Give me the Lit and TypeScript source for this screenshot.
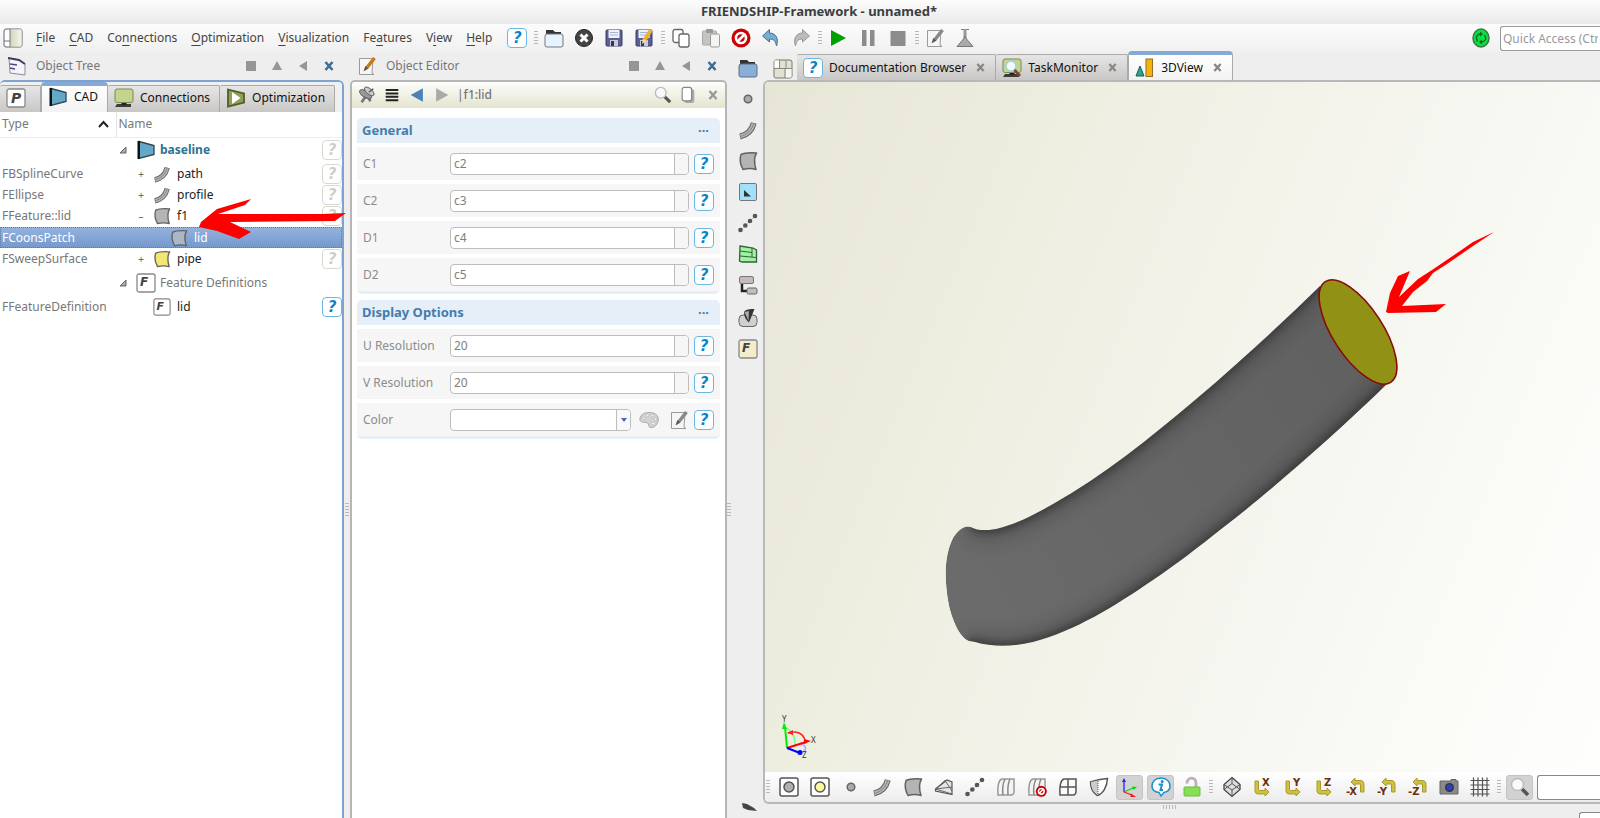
import { LitElement, html, svg, css, nothing } from "lit";
import { customElement, property, state } from "lit/decorators.js";
import { classMap } from "lit/directives/class-map.js";

const SURFACE = "M3 3.500C7 1.500 12 1.500 18.500 2C15.500 7 16 12 18 18.500C13 17 9 17.500 5 18.500C2 13 1.500 8 3 3.500Z";

const curve = svg`
  <path d="M2 16.500C9 15 14 10 15.800 3" fill="none" stroke="#666" stroke-width="6"/>
  <path d="M2.500 16.300C9 15 14 10 15.600 3.500" fill="none" stroke="#b5b5b5" stroke-width="4"/>
  <path d="M2 16.500C9 15 14 10 15.800 3" fill="none" stroke="#777" stroke-width=".8"/>`;

const surface = (fill: string) =>
  svg`<path d=${SURFACE} fill=${fill} stroke="#626262" stroke-width="1.500" stroke-linejoin="round"/>`;

const stop = svg`
  <circle cx="10" cy="10" r="9.500" fill="#cc0000"/>
  <circle cx="10" cy="10" r="5" fill="none" stroke="#fff" stroke-width="2.600"/>
  <path d="M6.500 13.500L13.500 6.500" stroke="#fff" stroke-width="2.600"/>`;

const floppy = svg`
  <rect x="2" y="2" width="16" height="16" rx="1" fill="#5a5f95" stroke="#3a3d68"/>
  <rect x="4.500" y="2" width="11" height="8" fill="#eef1fa"/>
  <path d="M6 4.500H14M6 7H14" stroke="#a9b4d6"/>
  <rect x="6" y="12" width="8" height="6" fill="#c9cad6"/>
  <rect x="7" y="13" width="3" height="5" fill="#33365c"/>`;

const editPage = (pen: string) => svg`
  <path d="M2.500 2.500H16L15 17L17 18.500H2.500Z" fill="#f6f6f6" stroke="#9a9a9a"/>
  <path d="M17.500 2L10 11.500" stroke=${pen} stroke-width="3.500"/>
  <path d="M11.500 12.500L8.300 10L6.500 15.500Z" fill="#555"/>`;

const frame = (fill: string) => svg`
  <rect x="1" y="1" width="18" height="18" rx="2" fill="#fff" stroke="#555" stroke-width="1.500"/>
  <circle cx="10" cy="10" r="5" fill=${fill} stroke="#555" stroke-width="1.500"/>`;

const points = svg`
  <path d="M3 17L17 3" stroke="#888" stroke-dasharray="1 1"/>
  <g fill="#555"><circle cx="2.500" cy="17" r="2.300"/><circle cx="7.300" cy="12.500" r="2.300"/>
  <circle cx="12" cy="8" r="2.300"/><circle cx="17" cy="3" r="2.300"/></g>`;

const stripes = svg`
  <path d="M2 17.500C1.500 10 2.500 3 6 2H18V14C18 17 17 18 15 18H2Z" fill="#f4f4f4" stroke="#999" stroke-width="1.500"/>
  <path d="M7 18C6 11 7 6 9 2M12 18C11.500 11 12 6 14 2" fill="none" stroke="#888" stroke-width="1.500"/>`;

const letterBox = (letter: string, fill: string, x: number, y: number, size: number) => svg`
  <rect x="1" y="1" width="18" height="18" rx="2" fill=${fill} stroke="#888" stroke-width="1.300"/>
  <text x=${x} y=${y} font-size=${size} font-weight="700" font-style="italic" fill="#444">${letter}</text>`;

const magnifier = svg`
  <path d="M12 12L18 18" stroke="#555" stroke-width="3.500"/>
  <circle cx="7.500" cy="7.500" r="6" fill="#fafafa" stroke="#bbb" stroke-width="1.500"/>`;

const axisArrow = (axis: string) => axis.startsWith("-")
  ? svg`<path d="M5 5L9 1V3.500H14C17 3.500 18 5 18 8V15H14.500V8C14.500 7 14 7 13 7H9V9Z" fill="#cfc043" stroke="#a89a28"/>
        <text x="0" y="18" font-size="10" font-weight="700" fill="#6e3010">${axis}</text>`
  : svg`<path d="M2 4H5.500V12C5.500 13 6 13.500 7 13.500H12V11L16 15L12 19V17H6C3 17 2 16 2 13Z" fill="#cfc043" stroke="#a89a28"/>
        <text x="9" y="9" font-size="10" font-weight="700" fill="#6e3010">${axis}</text>`;

const monitor = svg`
  <path d="M3 16H17V19H1Z" fill="#3c3c3c"/><rect x="7.500" y="14" width="5" height="3" fill="#222"/>
  <rect x="1" y="1" width="18" height="13.500" rx="2" fill="#c3d48d" stroke="#7c8a52"/>`;

const ICONS: Record<string, unknown> = {
  perspective: svg`<defs><linearGradient id="p"><stop offset="0" stop-color="#d4d4bc"/><stop offset="1" stop-color="#f5f5ec"/></linearGradient></defs>
    <rect x="1" y="1" width="18" height="18" rx="2" fill="#fff" stroke="#666"/><rect x="7" y="1.500" width="11.500" height="17" fill="url(#p)"/>
    <path d="M7 1V19M1 13H7" stroke="#777" fill="none"/>`,
  layout: svg`<rect x="1" y="1" width="18" height="18" rx="2" fill="#e2e2cf" stroke="#777"/><rect x="1.500" y="1.500" width="5" height="7" fill="#fff"/>
    <path d="M6.500 1V9M1 9.500H19M12 9.500V19M13 1V9" stroke="#888" fill="none"/><rect x="13" y="10" width="5.500" height="8.500" fill="#f6f6ee"/>`,
  folder: svg`<path d="M2 8V2H9L11 4H17V8Z" fill="#333"/><rect x="1" y="6" width="18" height="13" rx="2" fill="#e6f2ff" stroke="#777"/>`,
  blueFolder: svg`<path d="M2 8V2H9L11 4H17V8Z" fill="#333"/><rect x="1" y="6" width="18" height="13" rx="2" fill="#8aaed6" stroke="#5a6f88"/>`,
  close: svg`<circle cx="10" cy="10" r="8.500" fill="#444" stroke="#222"/><path d="M6.500 6.500L13.500 13.500M13.500 6.500L6.500 13.500" stroke="#fff" stroke-width="3"/>`,
  save: floppy,
  saveAs: svg`${floppy}<path d="M17 2L10.500 12" stroke="#f0b030" stroke-width="4"/><path d="M8.800 10.800L12.200 13L8 16Z" fill="#f4dfae"/>`,
  copy: svg`<rect x="2" y="1.500" width="10" height="13" rx="2" fill="#fff" stroke="#666" stroke-width="1.300"/><rect x="8" y="6" width="10" height="13" rx="2" fill="#fff" stroke="#666" stroke-width="1.300"/>`,
  paste: svg`<rect x="1.500" y="3" width="14" height="14" rx="1" fill="#c4c4c0" stroke="#aaa"/><rect x="5" y="1" width="7" height="4" rx="1" fill="#999"/><rect x="9.500" y="6" width="9" height="13" rx="1.500" fill="#f4f4f1" stroke="#999"/>`,
  forbid: stop,
  undo: svg`<path d="M1.500 8L8.500 1.500V5C15 5 18 11 15.500 18C14.500 13 13 11 8.500 11V14Z" fill="#76aed0" stroke="#4a6f88"/>`,
  redo: svg`<path d="M18.500 8L11.500 1.500V5C5 5 2 11 4.500 18C5.500 13 7 11 11.500 11V14Z" fill="#bbb" stroke="#999"/>`,
  play: svg`<path d="M3 2L18 10L3 18Z" fill="#00a000"/>`,
  pause: svg`<path d="M4 2H8.500V18H4ZM12 2H16.500V18H12Z" fill="#8c8c8c"/>`,
  stop: svg`<rect x="2.500" y="3" width="15" height="15" fill="#8c8c8c"/>`,
  editGray: editPage("#888"),
  edit: editPage("#c87a14"),
  flask: svg`<path d="M6 1.500H14" stroke="#777"/><rect x="8.500" y="1" width="3" height="10" fill="#999"/><path d="M10 8L11.500 11L18 18.500H2L8.500 11Z" fill="#aaa" stroke="#777"/>`,
  sync: svg`<ellipse cx="10" cy="10" rx="8" ry="9" fill="#12dc44" stroke="#3a7a48" stroke-width="1.500"/><path d="M6.500 13.500C4 9 6 6 10 6M13.500 7C16 11 14 14 10 14" fill="none" stroke="#07701f" stroke-width="1.300"/><path d="M9 3.500L12 6L9 8.500ZM11 11.500L8 14L11 16.500Z" fill="#07701f"/>`,
  tree: svg`<path d="M2 2L12 4L18 8V19L3 17Z" fill="#f4f4fa" stroke="#8a8a9c"/><path d="M1 2L12 4L18 8" fill="none" stroke="#3d3d66" stroke-width="2"/><path d="M3 8L10 9M3 12L8 13" stroke="#4a4a78" stroke-width="1.500"/>`,
  cad: svg`<path d="M3 1.500L18 5.500V14.500L3 18.500Z" fill="#64a8c8" stroke="#2f4450" stroke-width="1.300"/><path d="M1.500 1H4V19H1.500Z" fill="#111"/>`,
  parameters: letterBox("P", "#fff", 5, 15, 14),
  feature: letterBox("F", "#fff", 4, 13, 12),
  featureYellow: letterBox("F", "#f3edcb", 4, 13, 12),
  monitor,
  task: svg`${monitor}<circle cx="9" cy="8" r="5" fill="#eefaff" stroke="#a5cfe0" stroke-width="1.500"/><path d="M12.500 12L18 18" stroke="#7a4a36" stroke-width="3"/>`,
  optimize: svg`<path d="M2 1.500L18 5.500V14.500L2 18.500Z" fill="#8ea052" stroke="#4f5c2b" stroke-width="1.800"/><path d="M6 4L14.500 10L6 16Z" fill="#fff"/>`,
  view3d: svg`<path d="M5 8L9 18H1Z" fill="#2aa593" stroke="#1c5c52"/><rect x="11" y="1" width="6.500" height="17.500" fill="#f6b40a" stroke="#9a6d28"/>`,
  curve,
  surface: surface("#b4b4b4"),
  surfaceBlue: surface("#a9b7c8"),
  surfaceYellow: surface("#f4e673"),
  point: svg`<circle cx="10" cy="10" r="3.800" fill="#aaa" stroke="#666" stroke-width="1.500"/>`,
  plane: svg`<rect x="1.500" y="1.500" width="17" height="17" rx="1.500" fill="#9fe2fa" stroke="#777"/><path d="M6 8V14.500H13Z" fill="#333"/>`,
  points,
  mesh: svg`<path d="M2 2L15 4L18.500 6V18H4L1.500 17Z" fill="#9df5a4" stroke="#35603a" stroke-width="1.300"/><path d="M2 7L14 8.500M2 12L18 13.500M14 4V13" stroke="#35603a" stroke-width="1" fill="none"/>`,
  tree2: svg`<path d="M4 9V16H9" fill="none" stroke="#222" stroke-width="2.500"/><rect x="1.500" y="1.500" width="14" height="7" rx="1.500" fill="#c4bcbc" stroke="#777"/><rect x="9" y="13" width="10" height="6" rx="1.500" fill="#c4bcbc" stroke="#666"/>`,
  offset: svg`<rect x="1" y="7" width="18" height="11.500" rx="4" fill="#d0d0d0" stroke="#666"/><path d="M6 4C8 1 12 1 16.500 1L11 14.500C8 12 6 9 6 4Z" fill="#333"/><path d="M6.500 4L10.500 13L11 3Z" fill="#aaa"/>`,
  dish: svg`<path d="M9 10L14 17M9 11L4 18" stroke="#777" stroke-width="3"/><g fill="#999" stroke="#555"><ellipse cx="8.500" cy="9" rx="3.500" ry="7.500" transform="rotate(-60 8.500 9)"/><ellipse cx="12.500" cy="6" rx="3" ry="6.500" transform="rotate(-50 12.500 6)" fill="#ccc"/></g><path d="M12 7L17 3" stroke="#555" stroke-width="1.500"/>`,
  lines: svg`<path d="M3 4.500H17M3 8.300H17M3 12H17M3 15.800H17" stroke="#222" stroke-width="2.200"/>`,
  back: svg`<path d="M16.500 2.500V17.500L3 10Z" fill="#4c82b8"/>`,
  forward: svg`<path d="M3.500 2.500V17.500L17 10Z" fill="#aaa"/>`,
  magnifier,
  pages: svg`<rect x="6" y="3.500" width="11" height="15.500" rx="2.500" fill="#aaa"/><rect x="3.500" y="1.500" width="10.500" height="15" rx="2.500" fill="#fff" stroke="#888" stroke-width="1.300"/>`,
  palette: svg`<path d="M1 8C2 2 14 0 18.500 6C21 11 17 18 12 17.500C8 17 11 13 7 12.500C4 12.500 0 12 1 8Z" fill="#d2d2d2" stroke="#aaa"/><g fill="#f8f8f8" stroke="#b4b4b4" stroke-width=".7"><circle cx="4.500" cy="8.500" r="1.300"/><circle cx="8.500" cy="5.500" r="1.300"/><circle cx="13.500" cy="5.500" r="1.300"/><circle cx="16.500" cy="9" r="1.300"/><circle cx="14" cy="13.500" r="1.500"/></g>`,
  frame: frame("#b0b0b0"),
  frameYellow: frame("#fdf8a0"),
  solid: svg`<path d="M1.500 12L13 3L18 5V17.500L1.500 14Z" fill="#e6e6e6" stroke="#555" stroke-width="1.200"/><path d="M1.500 12L11 3.500L18 14M1.500 12L18 10M11 4L13 3M1.500 12L18 17" fill="none" stroke="#666"/>`,
  stripes,
  stripesOff: svg`${stripes}<g transform="translate(8.500 8.500) scale(.58)">${stop}</g>`,
  quad: svg`<path d="M2 18C1.500 10 2.500 3 6 2H18V14C18 17 17 18 15 18Z" fill="#fafafa" stroke="#555" stroke-width="1.500"/><path d="M10 2V18M2 10H18" stroke="#555" stroke-width="1.500"/>`,
  shield: svg`<path d="M1.500 5C7 3 12 2 18.500 1.500C18 10 14 17 8 18.500C3 15 1.500 10 1.500 5Z" fill="#fff" stroke="#555" stroke-width="1.500"/><path d="M2 5L9 3.500V18C4 15 2 10 2 5Z" fill="#ccc"/><path d="M9 4V17" stroke="#555" stroke-dasharray="1 1"/>`,
  axes: svg`<path d="M4 15V3" stroke="#22f" stroke-width="1.300"/><path d="M4 1L6 5H2Z" fill="#22f"/><path d="M4 15L13 11" stroke="#0d0" stroke-width="1.300"/><path d="M17 10L12 9.500L13.500 13Z" fill="#0d0"/><path d="M4 15L12 18" stroke="#f11" stroke-width="1.300"/><path d="M16 20L11 16.500L10.500 20Z" fill="#f11"/>`,
  info: svg`<path d="M10 1C16 1 19 5 19 9C19 13 16 15 13 15.500L10 19L8 15.500C4 15 1 13 1 9C1 5 4 1 10 1Z" fill="#fff" stroke="#1a8fd0" stroke-width="1.500"/><circle cx="11.200" cy="4.500" r="1.500" fill="#1a8fd0"/><path d="M7.500 7.500H11L9.500 13H12" fill="none" stroke="#1a8fd0" stroke-width="2"/>`,
  lock: svg`<path d="M5 6.500C5 -.500 14 -.500 14 6V10" fill="none" stroke="#b9b0b9" stroke-width="2.800"/><rect x="2" y="10" width="16" height="9" rx="1" fill="#86e055" stroke="#6bb945"/>`,
  cube: svg`<path d="M10 .500L18 7.500V12.500L10 19.500L2 12.500V7.500Z" fill="#ddd" stroke="#444" stroke-width="1.300"/><path d="M2 7.500L10 13L18 7.500M10 13V19M2 12.500L10 6.500L18 12.500M10 1V6.500" fill="none" stroke="#555"/>`,
  X: axisArrow("X"), Y: axisArrow("Y"), Z: axisArrow("Z"),
  "-X": axisArrow("-X"), "-Y": axisArrow("-Y"), "-Z": axisArrow("-Z"),
  camera: svg`<path d="M1 4H12V2.500H17V4H19V17H1Z" fill="#8a8a8a" stroke="#666"/><circle cx="10.500" cy="10.500" r="4.500" fill="#334"/><circle cx="10.500" cy="10.500" r="3" fill="#2c3ed0"/>`,
  grid: svg`<path d="M.500 3.500H19.500M.500 8H19.500M.500 12.500H19.500M.500 17H19.500M3.500 .500V19.500M8 .500V19.500M12.500 .500V19.500M17 .500V19.500" stroke="#555" stroke-width="1.200"/>`,
  wedge: svg`<path d="M4 0L9 1L16 5L19 8L10 7L5 5Z" fill="#444"/>`,
};

const icon = (name: string) => html`<svg class="icon" viewBox="0 0 20 20" aria-hidden="true">${ICONS[name]}</svg>`;
const help = (muted = false, label = "Help") =>
  html`<button class=${classMap({ help: true, muted })} aria-label=${label}>?</button>`;
const tool = (name: string, pressed = false) =>
  html`<button class=${classMap({ tool: true, pressed })} aria-label=${name}>${icon(name)}</button>`;
const grip = html`<span class="grip"></span>`;

const shared = css`
  :host { font: 12px/16px "Noto Sans", "Open Sans", sans-serif; color: #555; box-sizing: border-box; }
  *, *::before, *::after { box-sizing: border-box; }
  button, input, select { font: inherit; color: inherit; margin: 0; }
  button { border: 0; background: none; padding: 0; display: flex; align-items: center; justify-content: center; flex: none; }
  .icon { width: 20px; height: 20px; flex: none; display: block; overflow: visible; font-family: "DejaVu Sans", sans-serif; }
  .help { width: 20px; height: 20px; border: 1px solid #68b8e6; border-radius: 4px; background: #fff; color: #0a84c8; font: italic 700 15px/18px "DejaVu Sans", sans-serif; }
  .help.muted { border-color: #d8d8d2; color: #cfcfc6; }
  .grip { width: 4px; height: 16px; flex: none; background: radial-gradient(circle, #b8b8b8 35%, transparent 45%) 0 0 / 2px 3px; }
  .dock { display: flex; align-items: center; height: 28px; color: #777; padding: 0 10px 0 7px; gap: 9px; flex: none; }
  .dock h2 { font: inherit; margin: 0; flex: 1; }
  .dock .window { display: flex; gap: 15px; }
  .dock .window button { width: 11px; height: 12px; }
  .dock svg.mini { width: 10px; height: 10px; display: block; }
  .tab { height: 27px; padding: 0 8px 0 6px; gap: 6px; color: #111; border: 1px solid #aaa; border-bottom: 0; border-left-width: 0; background: linear-gradient(#e6e6e6, #c9c7c5); border-radius: 2px 2px 0 0; }
  .tab.active { height: 30px; background: linear-gradient(#fff, #f2f2f2); border-top: 4px solid #86aad8; border-left-width: 1px; border-radius: 4px 4px 0 0; }
`;

const dockButtons = html`
  <div class="window">
    <button aria-label="Dock"><svg class="mini" viewBox="0 0 10 10"><path d="M0 0H10V10H0Z" fill="#969696"/></svg></button>
    <button aria-label="Collapse"><svg class="mini" viewBox="0 0 10 10"><path d="M5 0L10 9H0Z" fill="#969696"/></svg></button>
    <button aria-label="Hide"><svg class="mini" viewBox="0 0 10 10"><path d="M9 0V10L1 5Z" fill="#969696"/></svg></button>
    <button aria-label="Close"><svg class="mini" viewBox="0 0 10 10"><path d="M1.500 1L8.500 9M8.500 1L1.500 9" stroke="#3b6f96" stroke-width="2.600"/></svg></button>
  </div>`;

interface Row { type: string; name: string; level: number; icon: string; twist?: string; kind?: string; help?: "muted" | "active"; }

const ROWS: Row[] = [
  { type: "", name: "baseline", level: 0, icon: "cad", twist: "open", kind: "tall root", help: "muted" },
  { type: "FBSplineCurve", name: "path", level: 1, icon: "curve", twist: "+", help: "muted" },
  { type: "FEllipse", name: "profile", level: 1, icon: "curve", twist: "+", help: "muted" },
  { type: "FFeature::lid", name: "f1", level: 1, icon: "surface", twist: "–", kind: "mid", help: "muted" },
  { type: "FCoonsPatch", name: "lid", level: 2, icon: "surfaceBlue", kind: "selected" },
  { type: "FSweepSurface", name: "pipe", level: 1, icon: "surfaceYellow", twist: "+", kind: "mid", help: "muted" },
  { type: "", name: "Feature Definitions", level: 0, icon: "feature", twist: "open", kind: "tall group" },
  { type: "FFeatureDefinition", name: "lid", level: 1, icon: "feature", kind: "mid", help: "active" },
];

@customElement("object-tree")
class ObjectTree extends LitElement {
  @state() private tab = "CAD";

  static styles = [shared, css`
    :host { display: flex; flex-direction: column; min-height: 0; }
    .panel { flex: 1; border: 2px solid #7ea3d0; border-left-width: 0; border-bottom: 0; border-radius: 5px 6px 0 0; background: #fff; overflow: hidden; }
    .tabs { display: flex; align-items: flex-end; background: #f0f0f0; height: 30px; }
    .tab { padding: 0 9px 3px 6px; }
    .tab.active { padding-bottom: 4px; }
    .tab.first { padding-right: 14px; }
    table { width: 100%; border-collapse: collapse; table-layout: fixed; }
    th, td { padding: 0; font-weight: 400; text-align: left; white-space: nowrap; }
    th { height: 25px; color: #777; border-bottom: 1px solid #eee; }
    th:first-child { width: 116px; border-right: 1px solid #e4e4e4; }
    th:last-child { width: 20px; }
    th:nth-child(2) { padding-left: 2px; }
    .sort { display: flex; justify-content: space-between; align-items: center; padding: 0 7px 0 2px; }
    td:first-child { padding-left: 2px; color: #777; }
    tr.row { height: 21px; }
    tr.mid { height: 22px; }
    tr.tall { height: 26px; }
    .name { display: flex; align-items: center; color: #222; height: 20px; }
    .twist { width: 16px; text-align: center; color: #666; font-size: 10px; margin-right: 4px; }
    .twist svg { display: block; margin-left: 3px; }
    .root .name { color: #2c7391; font-weight: 700; }
    .group .name { color: #777; }
    .selected { background: linear-gradient(#94b2de, #7599cc); outline: 1px dotted #5a7cab; outline-offset: -1px; }
    .selected td:first-child, .selected .name { color: #fff; }
    td .icon { width: 18px; height: 18px; margin: 0 6px 0 0; }
    .tall .icon { width: 20px; height: 20px; margin-right: 4px; }
  `];

  render() {
    const tabs = [["CAD", "cad"], ["Connections", "monitor"], ["Optimization", "optimize"]];
    return html`
      <header class="dock">${icon("tree")}<h2>Object Tree</h2>${dockButtons}</header>
      <div class="panel">
        <div class="tabs" role="tablist">
          <button class="tab first" role="tab" aria-label="Parameters">${icon("parameters")}</button>
          ${tabs.map(([label, glyph]) => html`
            <button role="tab" class=${classMap({ tab: true, active: this.tab === label })}
              @click=${() => (this.tab = label)}>${icon(glyph)}${label}</button>`)}
        </div>
        <table>
          <thead><tr>
            <th><span class="sort">Type<svg width="11" height="8" viewBox="0 0 11 8"><path d="M1 7L5.500 2L10 7" fill="none" stroke="#222" stroke-width="2"/></svg></span></th>
            <th>Name</th><th></th>
          </tr></thead>
          <tbody>${ROWS.map((r) => html`
            <tr class="row ${r.kind ?? ""}">
              <td>${r.type}</td>
              <td><div class="name" style="padding-left:${r.level * 17}px">
                <span class="twist">${r.twist === "open"
                  ? html`<svg width="8" height="8"><path d="M7 1V7H1Z" fill="#aaa" stroke="#666"/></svg>`
                  : r.twist ?? nothing}</span>${icon(r.icon)}<span>${r.name}</span></div></td>
              <td>${r.help ? help(r.help === "muted") : nothing}</td>
            </tr>`)}</tbody>
        </table>
      </div>`;
  }
}

@customElement("object-editor")
class ObjectEditor extends LitElement {
  static styles = [shared, css`
    :host { display: flex; flex-direction: column; min-height: 0; }
    .panel { flex: 1; border: 2px solid #b6b6b6; border-bottom: 0; border-radius: 5px 5px 0 0; background: #fff; overflow: hidden; }
    .bar { display: flex; align-items: center; height: 26px; gap: 5px; padding: 0 2px 0 5px; background: linear-gradient(#fdfdfb, #e4e4d0); color: #777; }
    .bar .path { flex: 1; font-weight: 500; }
    .bar .icon { width: 20px; height: 18px; }
    .bar .x { width: 20px; }
    .groups { padding: 10px 5px; display: grid; gap: 6px; }
    section { border-radius: 5px; overflow: hidden; display: grid; gap: 4px; border-bottom: 3px solid #e6eff6; }
    h3 { margin: 0; height: 25px; font-size: 13px; line-height: 25px; color: #457bae; background: #e6eff7; padding: 0 11px 0 5px; display: flex; justify-content: space-between; }
    h3 button { color: inherit; font-weight: 700; }
    .field { display: flex; align-items: center; gap: 5px; height: 33px; padding: 0 6px; background: #f6f6f6; color: #8c8c8c; }
    label { width: 82px; flex: none; }
    .box { flex: 1; display: flex; height: 22px; border: 1px solid #bdbdbd; border-radius: 4px; background: #fff; overflow: hidden; min-width: 0; }
    .box input { flex: 1; min-width: 0; border: 0; background: none; padding: 0 3px; outline: 0; color: #808080; }
    .box button { width: 14px; border-left: 1px solid #bdbdbd; background: #f6f6f6; }
    .combo { display: grid; grid-template-columns: 1fr 14px; }
    .combo select { grid-area: 1 / 1 / 2 / 3; appearance: none; border: 0; background: none; width: 100%; }
    .combo span { grid-area: 1 / 2; pointer-events: none; border-left: 1px solid #bdbdbd; background: #f9f9f9; display: grid; place-items: center; }
    .actions { display: flex; gap: 10px; margin-left: 3px; }
    .actions .icon { width: 20px; height: 20px; }
  `];

  private field(label: string, value: string) {
    const id = label.replace(" ", "-");
    return html`<div class="field"><label for=${id}>${label}</label>
      <div class="box"><input id=${id} .value=${value}><button aria-label="Options of ${label}"></button></div>${help()}</div>`;
  }

  render() {
    return html`
      <header class="dock">${icon("edit")}<h2>Object Editor</h2>${dockButtons}</header>
      <div class="panel">
        <div class="bar">
          ${tool("dish")}${tool("lines")}${tool("back")}${tool("forward")}
          <span class="path">|f1:lid</span>
          ${tool("magnifier")}${tool("pages")}
          <button class="x" aria-label="Close"><svg width="10" height="10" viewBox="0 0 10 10"><path d="M1.500 1L8.500 9M8.500 1L1.500 9" stroke="#999" stroke-width="2.400"/></svg></button>
        </div>
        <div class="groups">
          <section><h3>General<button aria-label="More">···</button></h3>
            ${this.field("C1", "c2")}${this.field("C2", "c3")}${this.field("D1", "c4")}${this.field("D2", "c5")}
          </section>
          <section><h3>Display Options<button aria-label="More">···</button></h3>
            ${this.field("U Resolution", "20")}${this.field("V Resolution", "20")}
            <div class="field"><label for="color">Color</label>
              <div class="box combo"><select id="color"><option></option></select>
                <span><svg width="6" height="4"><path d="M0 0H6L3 4Z" fill="#4a62b8"/></svg></span></div>
              <div class="actions">${tool("palette")}${tool("editGray")}</div>${help()}
            </div>
          </section>
        </div>
      </div>`;
  }
}

const UPPER = "M1340 266C1280 325 1240 362 1195 400C1150 438 1103 476 1053 504C1022 522 998 531 983 530C977 530 975 529 971 527";
const LOWER = "M968 642L975 642C992 647 1012 647 1033 642C1075 631 1115 606 1153 580C1178 563 1200 546 1220 530C1256 503 1330 440 1409 362";
const TUBE = `M1320 286C1280 325 1240 362 1195 400C1150 438 1103 476 1053 504C1022 522 998 531 983 530C977 530 975 529 971 527
  C963 524 956 533 953 538C944 556 944 580 949 606C953 622 960 638 969 641L975 642C992 647 1012 647 1033 642
  C1075 631 1115 606 1153 580C1178 563 1200 546 1220 530C1256 503 1330 440 1389 382L1358 332Z`;

@customElement("scene-view")
class SceneView extends LitElement {
  static styles = css`
    :host { display: block; min-height: 0; overflow: hidden; background: linear-gradient(112deg, #e7e6d6 0%, #eeeee1 30%, #f6f6f0 62%, #fefefd 100%); }
    svg { display: block; width: 100%; height: 100%; }
    text { font: 8px "Noto Sans", sans-serif; fill: #333; }
  `;

  render() {
    return html`<svg viewBox="765 82 835 690" preserveAspectRatio="xMinYMax meet" role="img" aria-label="Pipe with lid">
      <defs>
        <clipPath id="tube"><path d=${TUBE}/></clipPath>
        <filter id="soft" x="-10%" y="-10%" width="120%" height="120%"><feGaussianBlur stdDeviation="3"/></filter>
        <filter id="wide" x="-10%" y="-10%" width="120%" height="120%"><feGaussianBlur stdDeviation="9"/></filter>
        <linearGradient id="body" gradientUnits="userSpaceOnUse" x1="960" y1="590" x2="1360" y2="330">
          <stop offset="0" stop-color="#6b6b6b"/><stop offset="1" stop-color="#606060"/>
        </linearGradient>
      </defs>
      <g clip-path="url(#tube)">
        <path d=${TUBE} fill="url(#body)"/>
        <g fill="none" stroke="#2a2a2a">
          <g stroke-width="16" opacity=".4" filter="url(#wide)"><path d=${UPPER}/><path d=${LOWER}/></g>
          <g stroke-width="4" opacity=".9" filter="url(#soft)"><path d=${UPPER}/><path d=${LOWER}/></g>
        </g>
      </g>
      <ellipse cx="1358" cy="332" rx="60" ry="25" transform="rotate(57 1358 332)" fill="#919116" stroke="#8a0a0a" stroke-width="1.600"/>
      <path d="M1494 232L1473 242L1460 251L1432 270L1418 279L1399 297L1410 271L1398 276L1390 293L1386 312L1388 313L1436 312L1446 304L1402 306L1413 292L1427 281L1433 273L1447 264L1473 246Z" fill="#f00"/>
      <g fill="none" stroke-width="1.500">
        <path d="M787 728C793 732 796 740 795 747" stroke="#7f7" />
        <path d="M788 733C797 730 804 734 805 741" stroke="#f22"/>
        <path d="M801 744C806 745 807 750 803 752" stroke="#aaf"/>
        <path d="M787 748L785 727" stroke="#0e0" stroke-width="2"/>
        <path d="M787 748L806 742" stroke="#f00" stroke-width="2"/>
        <path d="M787 748L800 753" stroke="#00f" stroke-width="2"/>
      </g>
      <path d="M784 722L787 729H782Z" fill="#0e0"/><path d="M811 741L804 744L804 739Z" fill="#f00"/>
      <path d="M787 733L793 730V735Z" fill="#f22"/><circle cx="800" cy="752.500" r="2.500" fill="#00f"/>
      <text x="782" y="722">Y</text><text x="811" y="743">X</text><text x="802" y="758">Z</text>
    </svg>`;
  }
}

@customElement("view-tab")
class ViewTab extends LitElement {
  @property() label = "";
  @property() glyph = "";
  @property({ type: Boolean }) active = false;

  static styles = [shared, css`
    :host { display: block; }
    .tab { height: 26px; padding-right: 10px; }
    .tab.active { height: 29px; }
    .close { margin-left: 4px; }
    .help { pointer-events: none; display: grid; place-items: center; }
  `];

  render() {
    return html`<button role="tab" class=${classMap({ tab: true, active: this.active })}>
      ${this.glyph === "help" ? html`<span class="help">?</span>` : icon(this.glyph)}${this.label}
      <svg class="close" width="9" height="9" viewBox="0 0 10 10"><path d="M1.500 1L8.500 9M8.500 1L1.500 9" stroke="#888" stroke-width="2.500"/></svg>
    </button>`;
  }
}

const MENUS: [string, string, string][] = [
  ["", "F", "ile"], ["", "C", "AD"], ["Co", "n", "nections"], ["", "O", "ptimization"],
  ["", "V", "isualization"], ["Fe", "a", "tures"], ["V", "i", "ew"], ["", "H", "elp"],
];
const TOOLS = [["folder", "close", "save", "saveAs"], ["copy", "paste", "forbid", "undo", "redo"], ["play", "pause", "stop"], ["editGray", "flask"]];
const CREATE = [["blueFolder", "point", "curve", "surface", "plane", "points", "mesh", "tree2"], ["offset", "featureYellow"]];
const VIEW_TOOLS = [
  ["frame", "frameYellow", "point", "curve", "surface", "solid", "points", "stripes", "stripesOff", "quad", "shield", "axes", "info", "lock"],
  ["cube", "X", "Y", "Z", "-X", "-Y", "-Z", "camera", "grid"],
  ["magnifier"],
];
const PRESSED = new Set(["axes", "info", "magnifier"]);

@customElement("app-root")
class AppRoot extends LitElement {
  static styles = [shared, css`
    :host { display: flex; flex-direction: column; height: 100vh; background: #eee; overflow: hidden; position: relative; }
    .title { height: 24px; flex: none; margin: 0; background: linear-gradient(#fcfcfc, #e9e9e9); text-align: center; font-size: 13px; line-height: 23px; font-weight: 700; color: #3a3f42; padding-left: 38px; }
    .menubar { display: flex; align-items: center; height: 28px; flex: none; background: linear-gradient(#fcfcfc, #f0f0f0); padding-left: 3px; }
    nav { display: flex; gap: 14px; margin: 0 15px 0 13px; }
    nav button { color: #444; white-space: pre; display: block; }
    nav u { text-underline-offset: 3px; }
    .group { display: flex; align-items: center; gap: 10px; }
    .menubar .grip { margin: 0 6px 0 7px; }
    .menubar .spacer { flex: 1; }
    .quick { width: 100px; height: 25px; margin-left: 9px; border: 1px solid #999; border-right: 0; border-radius: 3px 0 0 3px; padding: 0 2px; background: #fff; }
    .quick::placeholder { color: #999; opacity: 1; }
    .work { flex: 1; min-height: 0; display: grid; grid-template-columns: 344px 6px 377px 36px minmax(0, 1fr); }
    .split { display: grid; justify-content: center; align-content: start; padding-top: 450px; }
    .split .grip, .side > .grip { height: 14px; }
    .side { display: flex; min-height: 0; overflow: hidden; }
    .side > .grip { margin-top: 450px; }
    .create { display: flex; flex-direction: column; align-items: center; padding: 6px 6px 0 7px; gap: 13px; }
    .create div { display: flex; flex-direction: column; gap: 11px; }
    .create .more { margin-top: 431px; }
    .view { display: flex; flex-direction: column; min-height: 0; }
    .tabs { display: flex; align-items: flex-end; height: 28px; padding-left: 10px; flex: none; }
    .tabs > .tool { margin: 0 4px 1px 0; }
    .frame { flex: 1; min-height: 0; display: flex; flex-direction: column; border: 2px solid #b8b8ba; border-right: 0; border-radius: 6px 0 0 6px; overflow: hidden; }
    scene-view { flex: 1; }
    .viewbar { height: 30px; flex: none; display: flex; align-items: center; background: linear-gradient(#fff, #ececec); }
    .viewbar .group { gap: 4px; }
    .viewbar .grip { margin: 0 5px 0 4px; }
    .viewbar .grip:first-child { margin-left: 1px; }
    .viewbar .tool { width: 27px; height: 25px; border-radius: 3px; }
    .viewbar .pressed { background: #d2d2d2; border: 1px solid #c4c4c4; }
    .find { flex: 1; min-width: 0; height: 25px; margin-left: 4px; border: 1px solid #888; border-right: 0; border-radius: 3px 0 0 3px; background: #fff; }
    .foot { height: 14px; flex: none; display: flex; justify-content: space-between; align-items: flex-start; }
    .foot .handle { width: 14px; height: 4px; margin: 1px 0 0 399px; background: radial-gradient(circle, #b8b8b8 35%, transparent 45%) 0 0 / 3px 2px; }
    .foot .corner { width: 21px; height: 6px; border: 1px solid #888; border-width: 1px 0 0 1px; border-radius: 3px 0 0 0; background: #fff; align-self: flex-end; }
    .note { position: absolute; left: 196px; top: 196px; pointer-events: none; }
  `];

  render() {
    return html`
      <h1 class="title">FRIENDSHIP-Framework - unnamed*</h1>
      <div class="menubar">
        ${tool("perspective")}
        <nav>${MENUS.map(([a, b, c]) => html`<button>${a}<u>${b}</u>${c}</button>`)}</nav>
        ${help()}
        ${TOOLS.map((g) => html`${grip}<div class="group">${g.map((t) => tool(t))}</div>`)}
        <span class="spacer"></span>
        ${tool("sync")}
        <input class="quick" aria-label="Quick Access" placeholder="Quick Access (Ctr">
      </div>
      <div class="work">
        <object-tree></object-tree>
        <div class="split">${grip}</div>
        <object-editor></object-editor>
        <div class="side">${grip}
          <div class="create">
            ${CREATE.map((g) => html`<div>${g.map((t) => tool(t))}</div>`)}
            <div class="more">${tool("wedge")}</div>
          </div>
        </div>
        <div class="view">
          <div class="tabs" role="tablist">
            ${tool("layout")}
            <view-tab label="Documentation Browser" glyph="help"></view-tab>
            <view-tab label="TaskMonitor" glyph="task"></view-tab>
            <view-tab label="3DView" glyph="view3d" active></view-tab>
          </div>
          <div class="frame">
            <scene-view></scene-view>
            <div class="viewbar">
              ${VIEW_TOOLS.map((g) => html`${grip}<div class="group">${g.map((t) => tool(t, PRESSED.has(t)))}</div>`)}
              <input class="find" aria-label="Find">
            </div>
          </div>
          <div class="foot"><span class="handle"></span><span class="corner"></span></div>
        </div>
      </div>
      <svg class="note" width="152" height="46" viewBox="196 196 152 46" aria-hidden="true">
        <path d="M199 227L201 222L217 209L251 199L245 205L218 214L322 214L346 213L335 221L230 222L251 232L239 239L217 231Z" fill="#f00"/>
      </svg>`;
  }
}
